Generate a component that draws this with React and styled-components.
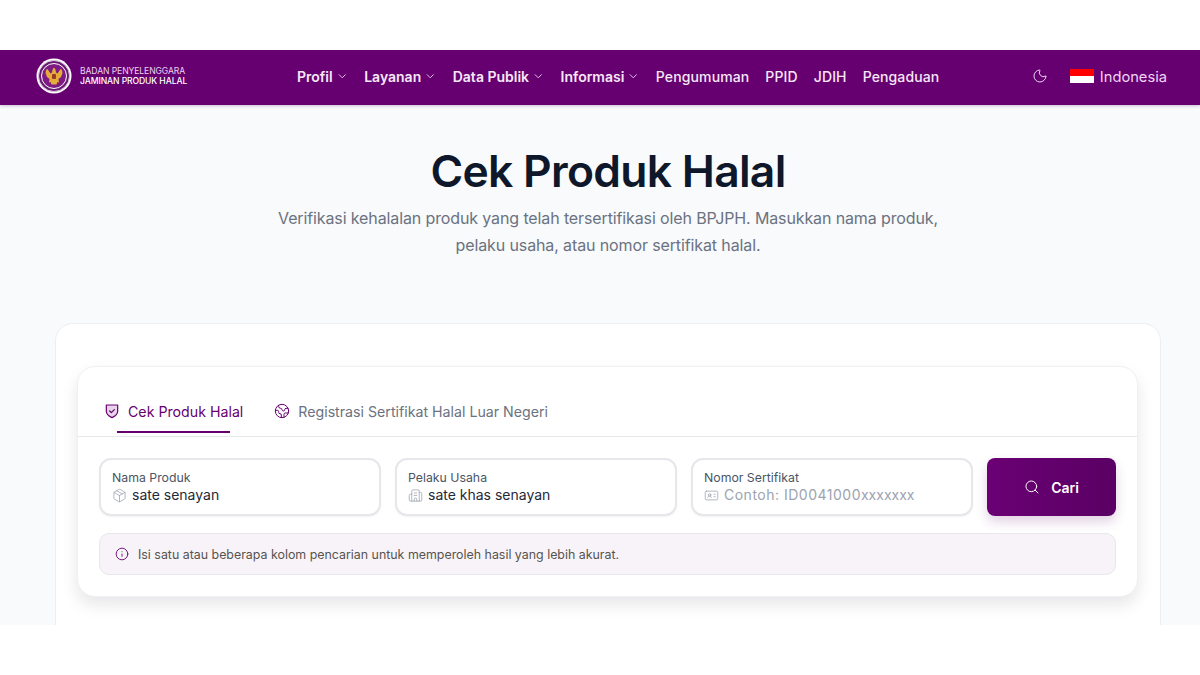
import { createGlobalStyle } from "styled-components";
import styled from "styled-components";
import { Moon, ChevronDown, Search, Info, Package, Building2, IdCard, Earth } from "lucide-react";

const purple = "#660070";

const GlobalStyle = createGlobalStyle`
  * { box-sizing: border-box; }
  html, body { margin: 0; background: #fff; }
  body { font-family: Inter, "Liberation Sans", sans-serif; }
`;

const Frame = styled.div`
  width: 1200px;
  height: 675px;
  padding: 50px 0;
  overflow: hidden;
  background: #fff;
`;

const Screen = styled.div`
  height: 575px;
  overflow: hidden;
  background: #f8fafc;
`;

const NavBar = styled.header`
  height: 55px;
  display: flex;
  align-items: center;
  padding: 0 33px 3px 36px;
  background: ${purple};
  box-shadow: 0 1px 3px rgba(80, 0, 90, 0.25);
`;

const Brand = styled.div`
  width: 261px;
  display: flex;
  align-items: center;
  gap: 8px;
`;

const BrandText = styled.div`
  display: flex;
  flex-direction: column;
  font-size: 8.6px;
  line-height: 10px;
  letter-spacing: -0.1px;
  color: #ecd4ef;
  b {
    font-weight: 500;
    color: #fff;
  }
`;

const Menu = styled.nav`
  display: flex;
  align-items: center;
  gap: 16px;
`;

const MenuItem = styled.a`
  display: flex;
  align-items: center;
  gap: 3px;
  font-size: 14px;
  font-weight: ${(p) => (p.$bold ? 600 : 500)};
  letter-spacing: ${(p) => (p.$bold ? "0" : "0.12px")};
  color: #f6e8f8;
  svg {
    color: #f0d4f4;
  }
`;

const NavRight = styled.div`
  margin-left: auto;
  display: flex;
  align-items: center;
  color: #f0d4f4;
`;

const Flag = styled.span`
  width: 24px;
  height: 14px;
  margin: 0 6px 0 22px;
  background: linear-gradient(#f00 50%, #fff 50%);
`;

const Language = styled.span`
  font-size: 14.7px;
  padding-top: 1px;
`;

const Content = styled.main`
  padding: 0 39px 0 55px;
`;

const Hero = styled.section`
  padding-top: 39px;
  height: 218px;
  text-align: center;
`;

const Title = styled.h1`
  margin: 0 0 7px;
  font-size: 44.4px;
  line-height: 54px;
  font-weight: 600;
  letter-spacing: -0.7px;
  color: #0f172a;
`;

const Subtitle = styled.p`
  margin: 0;
  font-size: 16px;
  line-height: 27px;
  letter-spacing: -0.12px;
  color: #6b7280;
`;

const OuterCard = styled.section`
  height: 340px;
  padding: 42px 22px 0 21px;
  background: #fff;
  border: 1px solid #eceef1;
  border-radius: 18px;
`;

const SearchCard = styled.div`
  height: 231px;
  background: #fff;
  border: 1px solid #eef0f2;
  border-radius: 18px;
  box-shadow: 0 8px 16px rgba(15, 23, 42, 0.1);
`;

const Tabs = styled.div`
  height: 70px;
  padding: 0 26px;
  display: flex;
  gap: 31px;
  border-bottom: 1px solid #e5e7eb;
`;

const Tab = styled.div`
  position: relative;
  padding-top: 35px;
  display: flex;
  align-items: flex-start;
  gap: 8px;
  font-size: 14.2px;
  line-height: 20px;
  color: ${(p) => (p.$active ? purple : "#6b7280")};
  svg {
    color: ${purple};
    flex: none;
    margin-top: 1px;
  }
  &::after {
    content: "";
    display: ${(p) => (p.$active ? "block" : "none")};
    position: absolute;
    left: 13px;
    right: 13px;
    bottom: 3px;
    height: 2px;
    background: ${purple};
  }
`;

const Fields = styled.div`
  padding: 21px 21px 0 21px;
  display: flex;
  gap: 14px;
`;

const Field = styled.label`
  width: 282px;
  height: 58px;
  padding: 10px 11px 0;
  background: #fff;
  border: 2px solid #e5e7eb;
  border-radius: 12px;
  box-shadow: 0 1px 2px rgba(15, 23, 42, 0.05);
`;

const FieldLabel = styled.div`
  font-size: 12.3px;
  line-height: 15px;
  color: #4b5563;
`;

const FieldValue = styled.div`
  display: flex;
  align-items: center;
  gap: 5px;
  margin-top: 1px;
  font-size: 14px;
  line-height: 18px;
  color: ${(p) => (p.$placeholder ? "#9ca3af" : "#1f2937")};
  svg {
    color: #9ca3af;
    flex: none;
  }
`;

const SampleDigits = styled.span`
  letter-spacing: 0.5px;
`;

const SearchButton = styled.button`
  width: 129px;
  height: 58px;
  display: flex;
  align-items: center;
  justify-content: center;
  gap: 11px;
  border: 0;
  border-radius: 8px;
  font: 600 14px Inter, sans-serif;
  color: #fff;
  background: linear-gradient(90deg, #6a0074, #5a0064);
  box-shadow: 0 6px 12px rgba(102, 0, 112, 0.18);
`;

const Notice = styled.div`
  height: 42px;
  margin: 17px 21px 0;
  padding: 0 15px;
  display: flex;
  align-items: center;
  gap: 9px;
  font-size: 12.4px;
  color: #57534e;
  background: #f7f3f9;
  border: 1px solid #e9e7ec;
  border-radius: 10px;
  svg {
    color: ${purple};
    flex: none;
  }
`;

const navMenus = ["Profil", "Layanan", "Data Publik", "Informasi"];
const navLinks = ["Pengumuman", "PPID", "JDIH", "Pengaduan"];

function Emblem() {
  return (
    <svg width="36" height="36" viewBox="0 0 36 36">
      <circle cx="18" cy="18" r="17.5" fill="#fff" />
      <circle cx="18" cy="18" r="15.5" fill="#6a1a72" stroke="#d9c7dc" />
      <circle cx="18" cy="18" r="12.5" fill="#7d1a84" stroke="#fff" />
      <path
        d="M18 9.5l1.5 2 .5 3 1.5 1 3-4.5 1.5 1 .5 3-1.5 4-2.5 2 .5 3.5-1.5-.5-1 2.5h-5l-1-2.5-1.5.5.5-3.5-2.5-2-1.5-4 .5-3 1.5-1 3 4.5 1.5-1 .5-3z"
        fill="#e3ad3a"
      />
      <rect x="16" y="16" width="4" height="5" rx="1" fill="#9c3a26" />
    </svg>
  );
}

function ShieldIcon() {
  return (
    <svg width="16" height="16" viewBox="0 0 24 24" fill="none" stroke="currentColor" strokeWidth="1.8" strokeLinejoin="round" strokeLinecap="round">
      <path d="M3.5 3h17v9.500c0 4.500-4 7.500-8.500 9.500-4.500-2-8.500-5-8.500-9.500z" fill="#e7d3ea" />
      <path d="M8.500 12l2.500 2.500 4.500-4.500" />
    </svg>
  );
}

export default function App() {
  return (
    <Frame>
      <GlobalStyle />
      <Screen>
        <NavBar>
          <Brand>
            <Emblem />
            <BrandText>
              <span>BADAN PENYELENGGARA</span>
              <b>JAMINAN PRODUK HALAL</b>
            </BrandText>
          </Brand>
          <Menu>
            {navMenus.map((item) => (
              <MenuItem key={item} $bold>
                {item}
                <ChevronDown size={12.5} strokeWidth={1.75} />
              </MenuItem>
            ))}
            {navLinks.map((item) => (
              <MenuItem key={item}>{item}</MenuItem>
            ))}
          </Menu>
          <NavRight>
            <Moon size={16} strokeWidth={1.5} />
            <Flag />
            <Language>Indonesia</Language>
          </NavRight>
        </NavBar>
        <Content>
          <Hero>
            <Title>Cek Produk Halal</Title>
            <Subtitle>
              Verifikasi kehalalan produk yang telah tersertifikasi oleh BPJPH. Masukkan nama produk,
              <br />
              pelaku usaha, atau nomor sertifikat halal.
            </Subtitle>
          </Hero>
          <OuterCard>
            <SearchCard>
              <Tabs>
                <Tab $active>
                  <ShieldIcon />
                  Cek Produk Halal
                </Tab>
                <Tab>
                  <Earth size={16} strokeWidth={1.5} />
                  Registrasi Sertifikat Halal Luar Negeri
                </Tab>
              </Tabs>
              <Fields>
                <Field>
                  <FieldLabel>Nama Produk</FieldLabel>
                  <FieldValue>
                    <Package size={15} strokeWidth={1.25} />
                    sate senayan
                  </FieldValue>
                </Field>
                <Field>
                  <FieldLabel>Pelaku Usaha</FieldLabel>
                  <FieldValue>
                    <Building2 size={15} strokeWidth={1.25} />
                    sate khas senayan
                  </FieldValue>
                </Field>
                <Field>
                  <FieldLabel>Nomor Sertifikat</FieldLabel>
                  <FieldValue $placeholder>
                    <IdCard size={15} strokeWidth={1.25} />
                    <span>
                      <SampleDigits>Contoh: ID0041000</SampleDigits>xxxxxxx
                    </span>
                  </FieldValue>
                </Field>
                <SearchButton>
                  <Search size={16} strokeWidth={1.5} />
                  Cari
                </SearchButton>
              </Fields>
              <Notice>
                <Info size={14} strokeWidth={1.5} />
                Isi satu atau beberapa kolom pencarian untuk memperoleh hasil yang lebih akurat.
              </Notice>
            </SearchCard>
          </OuterCard>
        </Content>
      </Screen>
    </Frame>
  );
}
